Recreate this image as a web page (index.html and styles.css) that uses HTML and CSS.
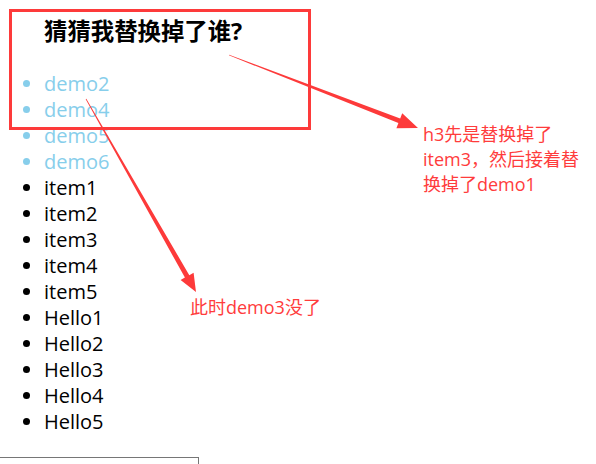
FILE: index.html
```html
<!DOCTYPE html>
<html lang="zh-CN">
<head>
<meta charset="utf-8">
<title>猜猜我替换掉了谁?</title>
<link rel="stylesheet" href="styles.css">
</head>
<body>
<div class="page">
  <div class="content">
    <h3 class="title">猜猜我替换掉了谁?</h3>
    <ul class="list">
      <li class="demo">demo2</li>
      <li class="demo">demo4</li>
      <li class="demo">demo5</li>
      <li class="demo">demo6</li>
      <li>item1</li>
      <li>item2</li>
      <li>item3</li>
      <li>item4</li>
      <li>item5</li>
      <li>Hello1</li>
      <li>Hello2</li>
      <li>Hello3</li>
      <li>Hello4</li>
      <li>Hello5</li>
    </ul>
    <div class="box"></div>
  </div>

  <div class="frame"></div>
  <svg class="arrows" width="596" height="464" viewBox="0 0 596 464" xmlns="http://www.w3.org/2000/svg">
    <polygon class="arrow" points="228.9,55.3 398.4,123.1 396.4,128.3 418,128 402.2,113.3 400.2,118.5 229.1,54.7"/>
    <polygon class="arrow" points="85.7,99.2 184.9,277.6 180.6,280.1 196,292 193.6,272.7 189.3,275.2 86.3,98.8"/>
  </svg>
  <p class="note note-right">h3先是替换掉了<br>item3，然后接着替<br>换掉了demo1</p>
  <p class="note note-mid">此时demo3没了</p>
</div>
</body>
</html>
```

FILE: styles.css
```css
html, body {
  margin: 0;
  padding: 0;
  background: #ffffff;
}

body {
  font-family: "Open Sans", "Noto Sans CJK SC", sans-serif;
  font-size: 20px;
  color: #000000;
}

.page {
  position: relative;
  width: 596px;
  height: 464px;
  overflow: hidden;
}

.content {
  padding-top: 16px;
}

.title {
  margin: 0 0 24px 44px;
  font-size: 23.4px;
  line-height: 31px;
  font-weight: bold;
}

.list {
  margin: 0;
  padding: 0 0 0 44px;
  list-style: disc outside;
}

.list li {
  line-height: 26px;
  height: 26px;
}

.list .demo {
  color: #87ceeb;
}

.box {
  margin-top: 22px;
  width: 198px;
  height: 30px;
  border: 1px solid #767676;
  border-left: none;
}

.frame {
  position: absolute;
  left: 9px;
  top: 9px;
  width: 296px;
  height: 115px;
  border: 3px solid #fd3a3a;
}

.arrows {
  position: absolute;
  left: 0;
  top: 0;
}

.arrow {
  fill: #fd3a3a;
}

.note {
  position: absolute;
  margin: 0;
  font-size: 18px;
  line-height: 25px;
  color: #ff3c3c;
  white-space: nowrap;
}

.note-right {
  left: 423px;
  top: 122px;
}

.note-mid {
  left: 190px;
  top: 295px;
}
```
